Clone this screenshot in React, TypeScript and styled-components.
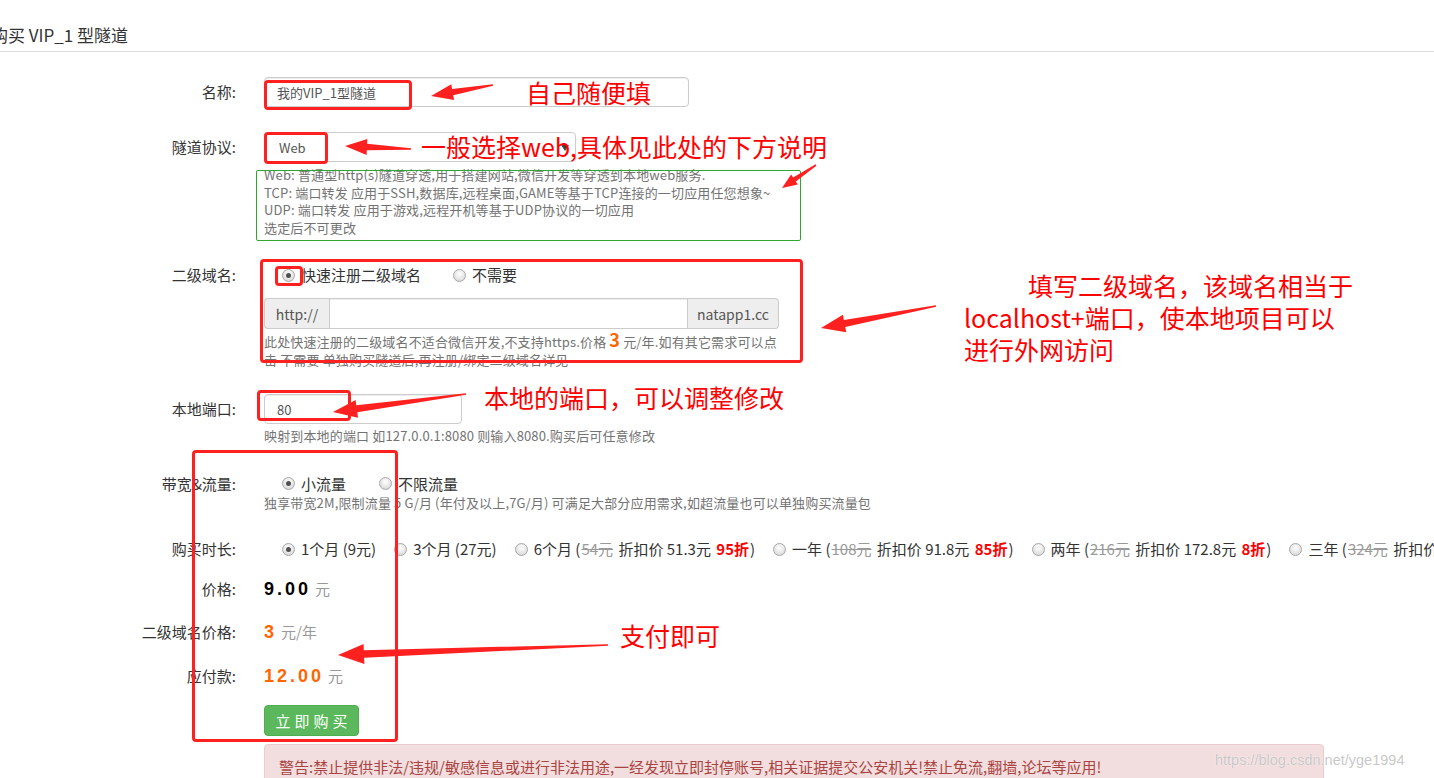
import React from "react";
import styled, { createGlobalStyle, css } from "styled-components";

const GlobalStyle = createGlobalStyle`
  html, body { margin: 0; padding: 0; overflow: hidden; background: #fff; }
  body {
    font-family: "Noto Sans CJK SC", "Noto Sans", sans-serif;
    color: #333;
    width: 1434px;
    height: 778px;
  }
  * { box-sizing: border-box; }
`;

const FONT = `"Noto Sans CJK SC", "Noto Sans", sans-serif`;

const Page = styled.div`
  position: relative;
  width: 1434px;
  height: 778px;
  overflow: hidden;
`;

const Header = styled.div`
  height: 52px;
  border-bottom: 1px solid #ddd;
  padding-top: 23px;
`;

const Title = styled.h3`
  margin: 0 0 0 -9px;
  font-size: 17px;
  font-weight: 400;
  line-height: 24px;
  color: #333;
  white-space: nowrap;
`;

const Row = styled.div<{ $mt: number }>`
  display: flex;
  align-items: flex-start;
  margin-top: ${(p) => p.$mt}px;
`;

const Label = styled.div<{ $h: number }>`
  width: 264px;
  flex-shrink: 0;
  padding-right: 28px;
  text-align: right;
  font-size: 15px;
  line-height: ${(p) => p.$h}px;
  color: #333;
  white-space: nowrap;
`;

const Control = styled.div`
  display: flex;
  flex-direction: column;
  align-items: flex-start;
  min-width: 0;
`;

const TextInput = styled.input<{ $w: number }>`
  width: ${(p) => p.$w}px;
  height: 30px;
  padding: 0 12px;
  border: 1px solid #ccc;
  border-radius: 4px;
  box-shadow: inset 0 1px 1px rgba(0, 0, 0, 0.075);
  font: 13px ${FONT};
  color: #555;
  background: #fff;
  outline: none;
`;

const SelectWrap = styled.div`
  position: relative;
  width: 312px;
  height: 30px;
  &::after {
    content: "";
    position: absolute;
    right: 7px;
    top: 13px;
    border-left: 4px solid transparent;
    border-right: 4px solid transparent;
    border-top: 6px solid #444;
  }
`;

const Select = styled.select`
  width: 100%;
  height: 30px;
  appearance: none;
  -webkit-appearance: none;
  padding: 0 0 0 14px;
  border: 1px solid #ccc;
  border-radius: 4px;
  background: #fff;
  font: 13px ${FONT};
  color: #555;
  outline: none;
`;

const Help = styled.div<{ $mt?: number }>`
  margin-top: ${(p) => p.$mt ?? 0}px;
  font-size: 13px;
  line-height: 17.5px;
  letter-spacing: 0.15px;
  color: #737373;
  white-space: nowrap;
`;

const PriceInline = styled.span`
  color: #f60;
  font-weight: 700;
  font-size: 18px;
`;

const InputGroup = styled.div`
  display: flex;
  width: 515px;
  height: 31px;
  margin-top: 13px;
`;

const Addon = styled.span<{ $side: "left" | "right"; $w: number }>`
  display: flex;
  align-items: center;
  justify-content: center;
  width: ${(p) => p.$w}px;
  flex-shrink: 0;
  background: #eee;
  border: 1px solid #ccc;
  font-size: 14px;
  color: #555;
  ${(p) =>
    p.$side === "left"
      ? css`border-radius: 4px 0 0 4px; border-right: 0;`
      : css`border-radius: 0 4px 4px 0; border-left: 0;`}
`;

const GroupInput = styled.input`
  flex: 1;
  min-width: 0;
  height: 31px;
  border: 1px solid #ccc;
  box-shadow: inset 0 1px 1px rgba(0, 0, 0, 0.075);
  outline: none;
  font: 13px ${FONT};
`;

const RadioGroup = styled.div`
  display: flex;
  align-items: center;
  height: 20px;
  padding-left: 18px;
  white-space: nowrap;
`;

const RadioItem = styled.label<{ $gap: number }>`
  display: inline-flex;
  align-items: center;
  margin-right: ${(p) => p.$gap}px;
  font-size: 15px;
  line-height: 20px;
  color: #333;
  flex-shrink: 0;
`;

const RadioDot = styled.span<{ $on?: boolean }>`
  position: relative;
  width: 13px;
  height: 13px;
  flex-shrink: 0;
  margin-right: 6px;
  border-radius: 50%;
  border: 1px solid #a8a8a8;
  background: radial-gradient(circle at 50% 35%, #ffffff 0%, #e6e6e6 55%, #cdcdcd 100%);
  ${(p) =>
    p.$on &&
    css`
      &::after {
        content: "";
        position: absolute;
        left: 3px;
        top: 3px;
        width: 5px;
        height: 5px;
        border-radius: 50%;
        background: #505050;
      }
    `}
`;

const Strike = styled.span`
  color: #999;
  text-decoration: line-through;
  margin: 0 2px 0 1px;
`;

const Discount = styled.span`
  color: #f00;
  font-weight: 700;
  margin: 0 1px 0 2px;
`;

const ValueLine = styled.div`
  display: flex;
  align-items: baseline;
  height: 20px;
  line-height: 20px;
  white-space: nowrap;
`;

const Amount = styled.span<{ $color: string }>`
  font-family: "Liberation Sans", Arial, sans-serif;
  font-size: 18px;
  font-weight: 700;
  letter-spacing: 3px;
  color: ${(p) => p.$color};
`;

const Unit = styled.span`
  font-size: 15px;
  color: #999;
  margin-left: 4px;
`;

const BuyButton = styled.button`
  width: 95px;
  height: 31px;
  border: 1px solid #4cae4c;
  border-radius: 4px;
  background: #5cb85c;
  color: #fff;
  font: 15px ${FONT};
  letter-spacing: 4px;
  padding: 0 0 0 4px;
`;

const Alert = styled.div`
  margin: 8px 0 0 264px;
  width: 1060px;
  padding: 12px 14px;
  background: #f2dede;
  border: 1px solid #ebccd1;
  border-radius: 4px;
  color: #a94442;
  font-size: 15px;
  line-height: 20px;
  white-space: nowrap;
`;

/* ---------- annotation overlay ---------- */

const Overlay = styled.div`
  position: absolute;
  inset: 0;
  pointer-events: none;
`;

const MarkBox = styled.div<{ $x: number; $y: number; $w: number; $h: number; $green?: boolean }>`
  position: absolute;
  left: ${(p) => p.$x}px;
  top: ${(p) => p.$y}px;
  width: ${(p) => p.$w}px;
  height: ${(p) => p.$h}px;
  ${(p) =>
    p.$green
      ? css`border: 1px solid #2da82d; border-radius: 2px;`
      : css`border: 3px solid #ff2020; border-radius: 4px;`}
`;

const Note = styled.div<{ $x: number; $y: number; $indent?: number }>`
  position: absolute;
  left: ${(p) => p.$x}px;
  top: ${(p) => p.$y}px;
  color: #ff0000;
  font-size: 25px;
  line-height: 32px;
  white-space: nowrap;
  text-indent: ${(p) => p.$indent ?? 0}px;
`;

const Watermark = styled.div`
  position: absolute;
  left: 1215px;
  top: 750px;
  font-family: "Liberation Sans", Arial, sans-serif;
  font-size: 14.5px;
  line-height: 20px;
  color: rgba(190, 190, 190, 0.85);
  text-shadow: 0 0 1px #fff;
  white-space: nowrap;
`;

const ArrowSvg = styled.svg`
  position: absolute;
  left: 0;
  top: 0;
`;

type ArrowDef = { tail: [number, number]; tip: [number, number]; head: number; hw: number; sw: number };

const arrows: ArrowDef[] = [
  { tail: [493, 85], tip: [431, 96], head: 22, hw: 8, sw: 3.2 },
  { tail: [411, 149], tip: [345, 146], head: 22, hw: 8, sw: 3.2 },
  { tail: [816, 165], tip: [782, 188], head: 15, hw: 6, sw: 2.4 },
  { tail: [936, 306], tip: [821, 328], head: 24, hw: 9, sw: 3.5 },
  { tail: [466, 394], tip: [333, 412], head: 24, hw: 9, sw: 3.5 },
  { tail: [608, 645], tip: [338, 655], head: 26, hw: 10, sw: 3.8 },
];

function arrowPoints(a: ArrowDef): string {
  const [tx, ty] = a.tail;
  const [px, py] = a.tip;
  const dx = px - tx;
  const dy = py - ty;
  const len = Math.hypot(dx, dy);
  const ux = dx / len;
  const uy = dy / len;
  const nx = -uy;
  const ny = ux;
  const bx = px - ux * a.head;
  const by = py - uy * a.head;
  const pts: [number, number][] = [
    [tx + nx * 0.8, ty + ny * 0.8],
    [bx + nx * a.sw, by + ny * a.sw],
    [bx + nx * a.hw, by + ny * a.hw],
    [px, py],
    [bx - nx * a.hw, by - ny * a.hw],
    [bx - nx * a.sw, by - ny * a.sw],
    [tx - nx * 0.8, ty - ny * 0.8],
  ];
  return pts.map(([x, y]) => `${x.toFixed(1)},${y.toFixed(1)}`).join(" ");
}

function Radio({ on, gap, children }: { on?: boolean; gap: number; children: React.ReactNode }) {
  return (
    <RadioItem $gap={gap}>
      <RadioDot $on={on} />
      <span>{children}</span>
    </RadioItem>
  );
}

export default function App() {
  return (
    <Page>
      <GlobalStyle />
      <Header>
        <Title>购买 VIP_1 型隧道</Title>
      </Header>

      <Row $mt={25}>
        <Label $h={30}>名称:</Label>
        <Control>
          <TextInput $w={425} defaultValue="我的VIP_1型隧道" />
        </Control>
      </Row>

      <Row $mt={25}>
        <Label $h={30}>隧道协议:</Label>
        <Control>
          <SelectWrap>
            <Select defaultValue="web">
              <option value="web">Web</option>
              <option value="tcp">TCP</option>
              <option value="udp">UDP</option>
            </Select>
          </SelectWrap>
          <Help $mt={4}>
            Web: 普通型http(s)隧道穿透,用于搭建网站,微信开发等穿透到本地web服务.
            <br />
            TCP: 端口转发 应用于SSH,数据库,远程桌面,GAME等基于TCP连接的一切应用任您想象~
            <br />
            UDP: 端口转发 应用于游戏,远程开机等基于UDP协议的一切应用
            <br />
            选定后不可更改
          </Help>
        </Control>
      </Row>

      <Row $mt={29}>
        <Label $h={20}>二级域名:</Label>
        <Control>
          <RadioGroup>
            <Radio on gap={32}>快速注册二级域名</Radio>
            <Radio gap={0}>不需要</Radio>
          </RadioGroup>
          <InputGroup>
            <Addon $side="left" $w={65}>http://</Addon>
            <GroupInput />
            <Addon $side="right" $w={91}>natapp1.cc</Addon>
          </InputGroup>
          <Help $mt={2}>
            此处快速注册的二级域名不适合微信开发,不支持https.价格 <PriceInline>3</PriceInline> 元/年.如有其它需求可以点
            <br />
            击 不需要 单独购买隧道后,再注册/绑定二级域名详见
          </Help>
        </Control>
      </Row>

      <Row $mt={26}>
        <Label $h={30}>本地端口:</Label>
        <Control>
          <TextInput $w={198} defaultValue="80" />
          <Help $mt={3}>映射到本地的端口 如127.0.0.1:8080 则输入8080.购买后可任意修改</Help>
        </Control>
      </Row>

      <Row $mt={29}>
        <Label $h={20}>带宽&amp;流量:</Label>
        <Control>
          <RadioGroup>
            <Radio on gap={33}>小流量</Radio>
            <Radio gap={0}>不限流量</Radio>
          </RadioGroup>
          <Help>独享带宽2M,限制流量 5 G/月 (年付及以上,7G/月) 可满足大部分应用需求,如超流量也可以单独购买流量包</Help>
        </Control>
      </Row>

      <Row $mt={28}>
        <Label $h={20}>购买时长:</Label>
        <Control>
          <RadioGroup>
            <Radio on gap={18}>1个月 (9元)</Radio>
            <Radio gap={18}>3个月 (27元)</Radio>
            <Radio gap={18}>
              6个月 (<Strike>54元</Strike> 折扣价 51.3元 <Discount>95折</Discount>)
            </Radio>
            <Radio gap={18}>
              一年 (<Strike>108元</Strike> 折扣价 91.8元 <Discount>85折</Discount>)
            </Radio>
            <Radio gap={18}>
              两年 (<Strike>216元</Strike> 折扣价 172.8元 <Discount>8折</Discount>)
            </Radio>
            <Radio gap={0}>
              三年 (<Strike>324元</Strike> 折扣价 259.2元 <Discount>8折</Discount>)
            </Radio>
          </RadioGroup>
        </Control>
      </Row>

      <Row $mt={20}>
        <Label $h={20}>价格:</Label>
        <Control>
          <ValueLine>
            <Amount $color="#000">9.00</Amount>
            <Unit>元</Unit>
          </ValueLine>
        </Control>
      </Row>

      <Row $mt={23}>
        <Label $h={20}>二级域名价格:</Label>
        <Control>
          <ValueLine>
            <Amount $color="#f60">3</Amount>
            <Unit>元/年</Unit>
          </ValueLine>
        </Control>
      </Row>

      <Row $mt={24}>
        <Label $h={20}>应付款:</Label>
        <Control>
          <ValueLine>
            <Amount $color="#f60">12.00</Amount>
            <Unit>元</Unit>
          </ValueLine>
        </Control>
      </Row>

      <Row $mt={19}>
        <Label $h={31} />
        <Control>
          <BuyButton type="button">立即购买</BuyButton>
        </Control>
      </Row>

      <Alert>
        警告:禁止提供非法/违规/敏感信息或进行非法用途,一经发现立即封停账号,相关证据提交公安机关!禁止免流,翻墙,论坛等应用!
      </Alert>

      <Overlay>
        <MarkBox $green $x={256} $y={170} $w={545} $h={71} />
        <MarkBox $x={264} $y={80} $w={148} $h={30} />
        <MarkBox $x={264} $y={132} $w={64} $h={32} />
        <MarkBox $x={260} $y={259} $w={543} $h={104} />
        <MarkBox $x={275} $y={266} $w={28} $h={20} />
        <MarkBox $x={257} $y={390} $w={94} $h={31} />
        <MarkBox $x={192} $y={450} $w={206} $h={292} />

        <ArrowSvg width={1434} height={778} viewBox="0 0 1434 778">
          {arrows.map((a, i) => (
            <polygon key={i} points={arrowPoints(a)} fill="#ff2020" />
          ))}
        </ArrowSvg>

        <Note $x={526} $y={76}>自己随便填</Note>
        <Note $x={421} $y={130}>一般选择web,具体见此处的下方说明</Note>
        <Note $x={964} $y={269} $indent={64}>
          填写二级域名，该域名相当于
          <br />
          localhost+端口，使本地项目可以
          <br />
          进行外网访问
        </Note>
        <Note $x={484} $y={381}>本地的端口，可以调整修改</Note>
        <Note $x={620} $y={619}>支付即可</Note>
        <Watermark>https://blog.csdn.net/yge1994</Watermark>
      </Overlay>
    </Page>
  );
}
